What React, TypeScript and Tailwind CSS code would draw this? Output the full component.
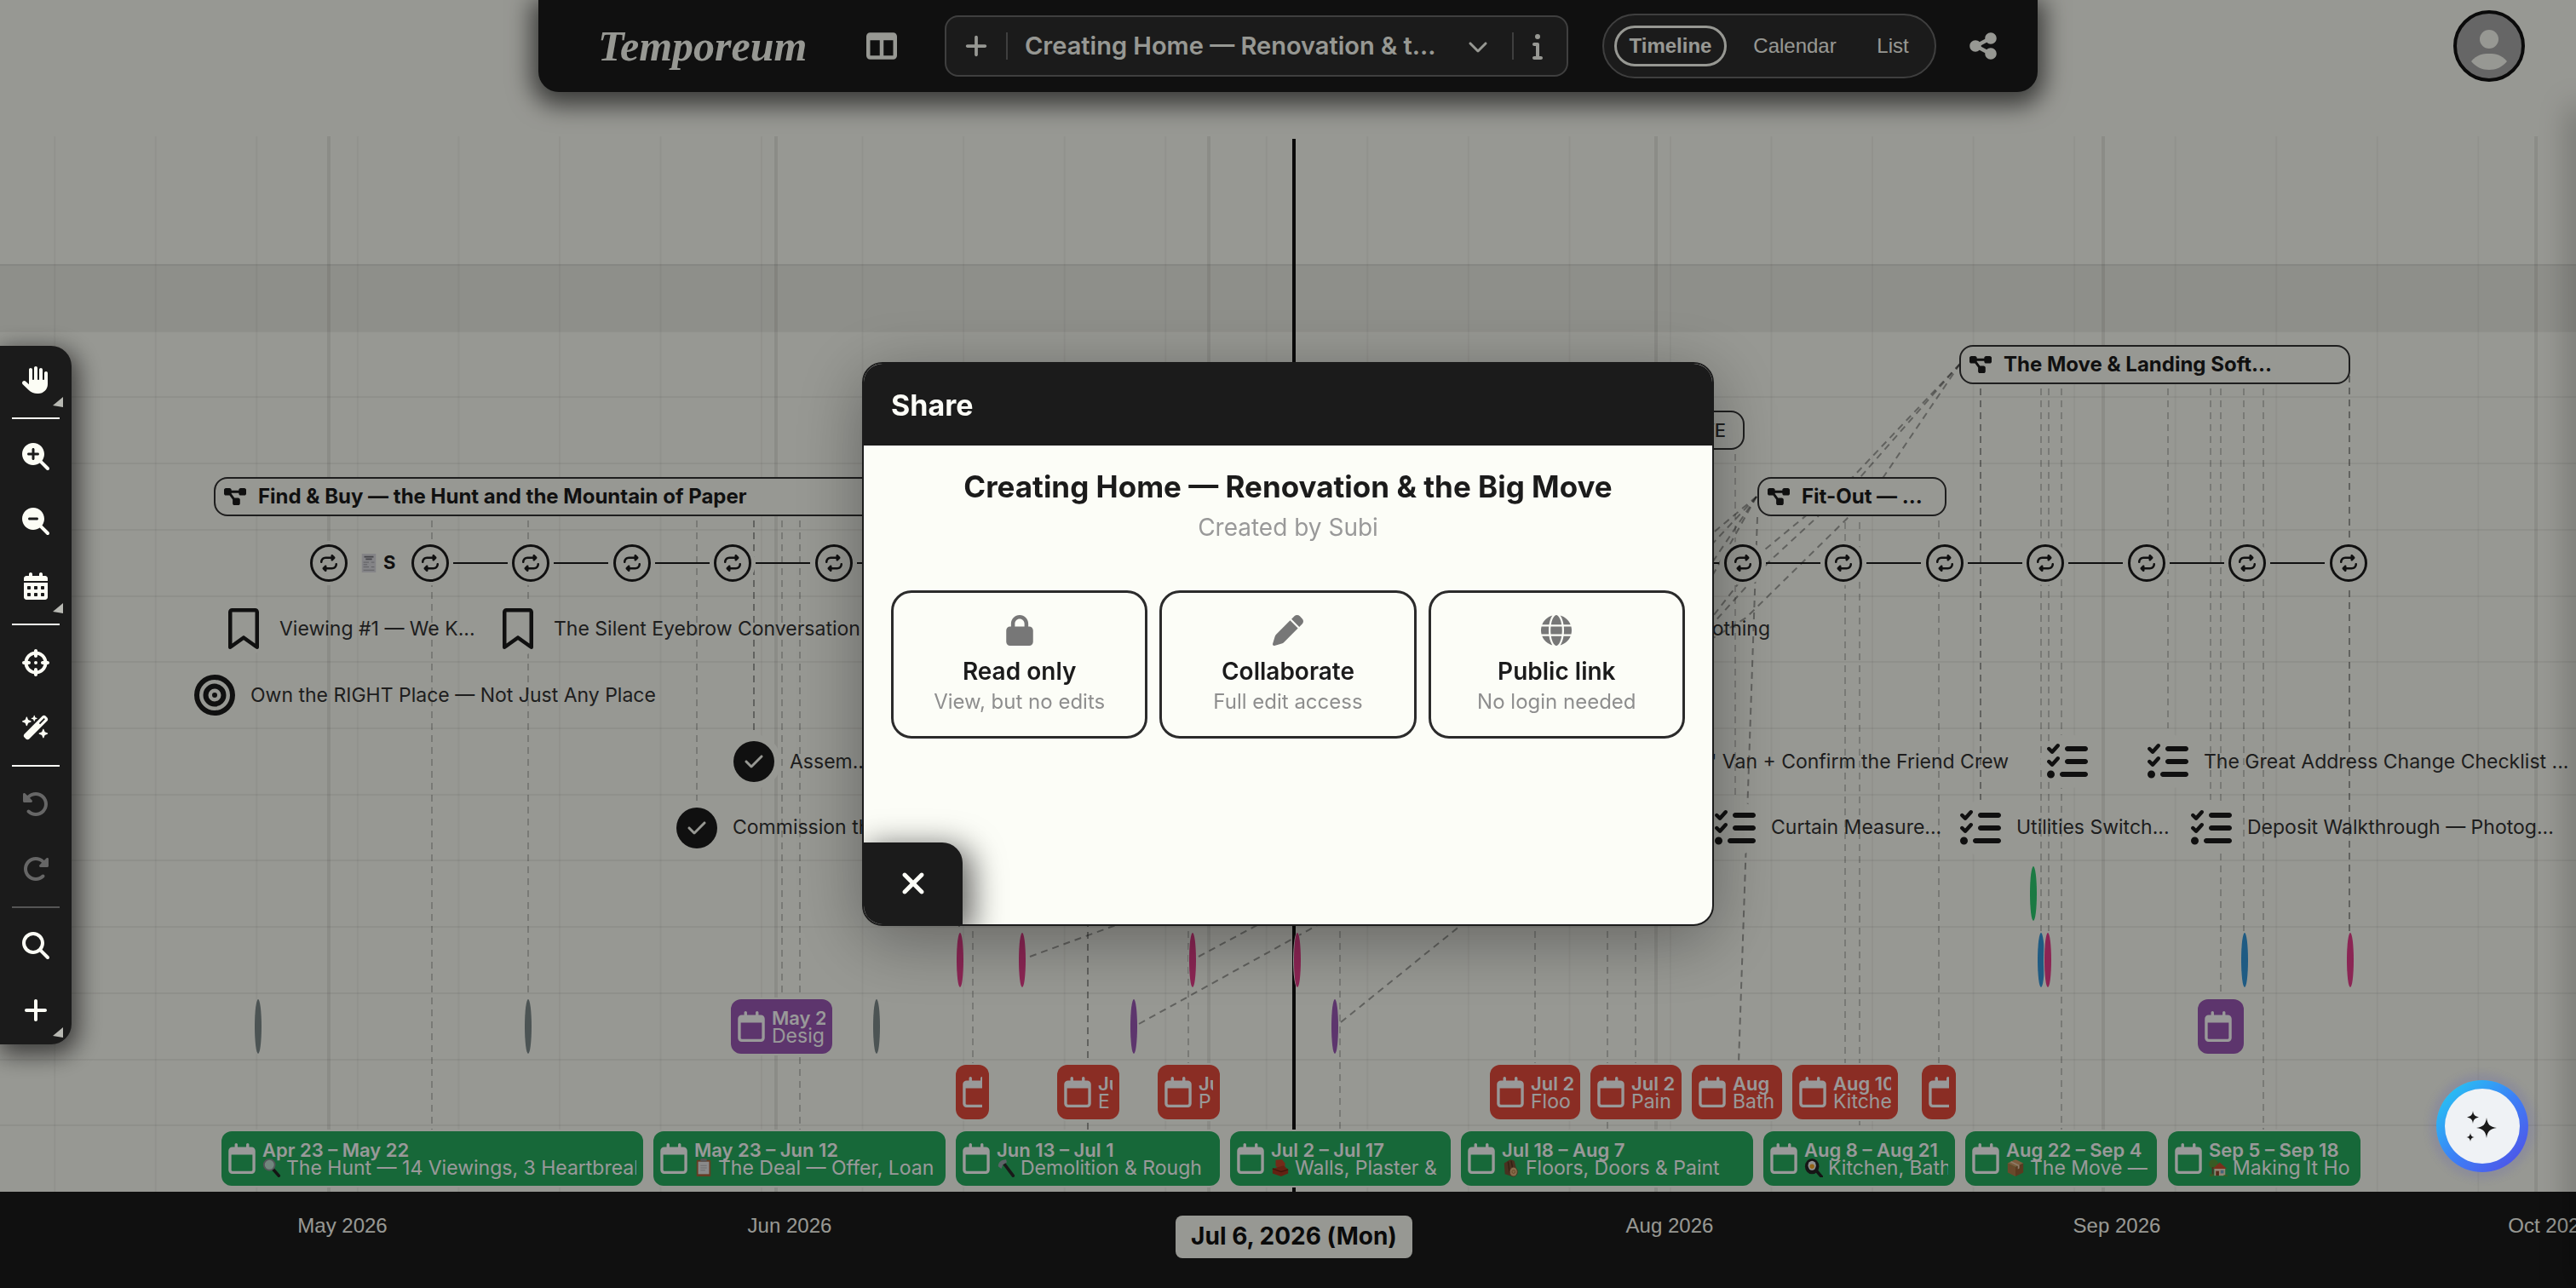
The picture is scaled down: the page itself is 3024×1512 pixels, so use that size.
import type { ReactNode } from 'react';
import {
  FaBullseye,
  FaCalendarDays,
  FaCheck,
  FaChevronDown,
  FaCrosshairs,
  FaDiagramProject,
  FaGlobe,
  FaHand,
  FaInfo,
  FaListCheck,
  FaLock,
  FaMagnifyingGlass,
  FaMagnifyingGlassMinus,
  FaMagnifyingGlassPlus,
  FaPen,
  FaPlus,
  FaRegBookmark,
  FaRegCalendar,
  FaRepeat,
  FaRotateLeft,
  FaRotateRight,
  FaShareNodes,
  FaTableColumns,
  FaWandMagicSparkles,
  FaXmark,
} from 'react-icons/fa6';

type EmojiName = 'magnifier' | 'clipboard' | 'hammer' | 'brick' | 'wood' | 'pan' | 'box' | 'house' | 'receipt';

const emojis: Record<EmojiName, ReactNode> = {
  magnifier: (
    <>
      <path d="M14 14l7 8" stroke="#222" strokeWidth="4" strokeLinecap="round" />
      <circle cx="9" cy="8" r="7" fill="#bfe0d2" stroke="#8a8f94" strokeWidth="2" />
    </>
  ),
  clipboard: (
    <>
      <rect x="3" y="2" width="18" height="21" rx="1" fill="#a8643a" />
      <rect x="5" y="4" width="14" height="16" fill="#e6e6e6" />
      <rect x="8" y="0" width="8" height="4" rx="1" fill="#8d8d8d" />
      <path d="M8 9h8M8 12h8M8 15h6" stroke="#b5b5b5" />
    </>
  ),
  hammer: (
    <>
      <path d="M9 6l12 16" stroke="#2b2b2b" strokeWidth="4" strokeLinecap="round" />
      <path d="M2 10c0-5 3-8 10-9l1 4-5 3-2 5z" fill="#9aa5ad" />
    </>
  ),
  brick: (
    <>
      <path d="M6 2l8-1 4 5v5l-9 2-3-4z" fill="#c0492b" />
      <path d="M2 13l14-4 6 5v5l-9 4-11-4z" fill="#a63a1f" />
      <path d="M2 13l11 4 9-3" stroke="#6d2413" strokeWidth="1.5" fill="none" />
    </>
  ),
  wood: (
    <>
      <path d="M3 6l8-5 5 2 4 16-7 4-9-3z" fill="#7a5236" />
      <path d="M8 4l2 14M12 3l2 10" stroke="#54361f" strokeWidth="1.5" />
      <ellipse cx="15" cy="17" rx="5" ry="6" fill="#e0b27c" stroke="#7a5236" />
      <circle cx="15" cy="17" r="2" fill="none" stroke="#a9773f" />
    </>
  ),
  pan: (
    <>
      <path d="M15 15l7 8" stroke="#222" strokeWidth="4" strokeLinecap="round" />
      <ellipse cx="10" cy="10" rx="9" ry="10" fill="#262626" />
      <ellipse cx="10" cy="9" rx="5" ry="6" fill="#f4f4f4" />
      <circle cx="10" cy="10" r="3" fill="#f7a928" />
    </>
  ),
  box: (
    <>
      <path d="M12 1l10 5-10 5L2 6z" fill="#d09a66" />
      <path d="M2 6l10 5v12L2 18z" fill="#b07a48" />
      <path d="M22 6l-10 5v12l10-5z" fill="#966236" />
      <path d="M7 3.5l10 5v4l-2 1V9.500L5 4.500z" fill="#e9cfae" />
    </>
  ),
  house: (
    <>
      <circle cx="6" cy="7" r="6" fill="#5d9a3c" />
      <path d="M5 11v10" stroke="#7a5236" strokeWidth="2" />
      <path d="M7 12h14v10H7z" fill="#f0dcc0" />
      <path d="M5 13l9-8 9 8z" fill="#c8502f" />
      <path d="M9 16h4v6H9z" fill="#8d4a2b" />
      <path d="M15 15h4v4h-4z" fill="#6fa8c9" />
      <path d="M1 20h5v3H1zM19 21h5v2h-5z" fill="#5d9a3c" />
    </>
  ),
  receipt: (
    <>
      <rect x="3" y="0" width="18" height="24" fill="#dcdce2" />
      <path d="M6 4h12M8 7h8" stroke="#77777d" strokeWidth="2" />
      <path d="M5 11h7M5 14h5M5 17h7M15 11h4M15 17h4M5 21h14" stroke="#9a9aa0" />
    </>
  ),
};

function Emoji({ name }: { name: EmojiName }) {
  return (
    <svg viewBox="0 0 24 24" className="inline-block h-[22px] w-[22px] shrink-0" fill="none" aria-hidden="true">
      {emojis[name]}
    </svg>
  );
}

/* Time scale: 16.935px a day, May 1 sits at 386px */
const DAY = 16.935;
const MAY_1 = 386;

const months = [
  { label: 'May 2026', day: 0 },
  { label: 'Jun 2026', day: 31 },
  { label: 'Jul 2026', day: 61, hidden: true },
  { label: 'Aug 2026', day: 92 },
  { label: 'Sep 2026', day: 123 },
  { label: 'Oct 2026', day: 153 },
];

const weeks = Array.from({ length: 25 }, (_, i) => MAY_1 + (i * 7 - 19) * DAY);
const repeats = Array.from({ length: 21 }, (_, i) => Math.round(MAY_1 + i * 7 * DAY));

/* x, top, bottom, strong */
const drops: [number, number, number, boolean?][] = [
  [507, 611, 1326],
  [620, 611, 1165],
  [818, 611, 940],
  [885, 611, 857, true],
  [918, 611, 1166],
  [939, 611, 1326],
  [1126, 1080, 1094, true],
  [1142, 1093, 1248],
  [1277, 1080, 1326, true],
  [1395, 1093, 1248],
  [1573, 1093, 1326],
  [1802, 1093, 1248],
  [1887, 1093, 1326],
  [1920, 1093, 1248],
  [2037, 533, 937],
  [2166, 613, 1248],
  [2183, 613, 1326],
  [2276, 611, 1248],
  [2325, 456, 939, true],
  [2396, 456, 1093],
  [2405, 456, 1093],
  [2420, 456, 1326],
  [2545, 456, 855],
  [2595, 456, 939],
  [2607, 456, 1170],
  [2634, 456, 1093],
  [2657, 456, 1326],
  [2758, 441, 1093, true],
];

const links = [
  'M1209 1123L1340 1075',
  'M1407 1123L1500 1073',
  'M1337 1202L1570 1073',
  'M1574 1200L1725 1078',
  'M2063 607L2041 1248',
  'M2301 427L2175 560L2072 645L1990 750',
  'M2301 427L2184 560L2076 660L1990 755',
  'M2301 427L2211 560L2168 609L2050 725L1990 762',
  'M2062 583L1990 643',
  'M2062 583L1990 660',
  'M2062 583L1990 690',
  'M2062 583L1990 712',
];

function Grid() {
  return (
    <svg className="absolute left-0 bottom-0 h-[1399px] w-full" aria-hidden="true">
      {weeks.map((x) => (
        <path key={x} d={`M${x} 160V1399`} stroke="#000" strokeOpacity="0.04" strokeWidth="2" />
      ))}
      {months.map((m) => (
        <path
          key={m.label}
          d={`M${MAY_1 + m.day * DAY} 160V1399`}
          stroke="#000"
          strokeOpacity="0.08"
          strokeWidth="4"
        />
      ))}
      <path d="M1519 163V1399" stroke="#111" strokeWidth="4" />
      {drops.map(([x, top, bottom, strong]) => (
        <path
          key={x}
          d={`M${x} ${top}V${bottom}`}
          stroke="#1b1b1b"
          strokeOpacity={strong ? 0.4 : 0.22}
          strokeWidth="2"
          strokeDasharray="8 6"
        />
      ))}
      {links.map((d) => (
        <path key={d} d={d} fill="none" stroke="#1b1b1b" strokeOpacity="0.4" strokeWidth="2" strokeDasharray="8 6" />
      ))}
    </svg>
  );
}

function Row({ shaded, children }: { shaded?: boolean; children?: ReactNode }) {
  return (
    <div className={`relative border-t-2 border-black/5 ${shaded ? 'bg-black/6' : ''}`}>{children}</div>
  );
}

/* Puts its child on the row's centre line, x px from the left */
function At({ x, w, children }: { x: number; w?: number; children: ReactNode }) {
  return (
    <div className="absolute inset-y-0 flex items-center" style={{ left: x, width: w }}>
      {children}
    </div>
  );
}

function Phase({ x, w, children }: { x: number; w: number; children: ReactNode }) {
  return (
    <At x={x} w={w}>
      <button className="flex h-[46px] w-full items-center gap-3.5 overflow-hidden whitespace-nowrap rounded-2xl border-2 border-[#333] bg-[#fcfdf5] px-2.5 text-2xl font-bold text-[#1b1b1b]">
        <FaDiagramProject className="h-[26px] w-[26px] shrink-0" />
        {children}
      </button>
    </At>
  );
}

function Note({ x, kind, children }: { x: number; kind: 'bookmark' | 'goal' | 'done' | 'list'; children?: ReactNode }) {
  return (
    <At x={x}>
      <button className="flex items-center gap-[10px] whitespace-nowrap text-[23px] text-[#333]">
        <span className="flex h-16 w-16 shrink-0 items-center justify-center rounded-full bg-[#fcfdf5] text-[#1b1b1b]">
          {kind === 'bookmark' && <FaRegBookmark className="h-12 w-12" />}
          {kind === 'goal' && <FaBullseye className="h-12 w-12" />}
          {kind === 'list' && <FaListCheck className="h-12 w-12" />}
          {kind === 'done' && (
            <span className="flex h-12 w-12 items-center justify-center rounded-full bg-[#1b1b1b] text-[#fcfdf5]">
              <FaCheck className="h-6 w-6" />
            </span>
          )}
        </span>
        {children}
      </button>
    </At>
  );
}

const tones = {
  green: 'bg-[#27ae60]',
  emerald: 'bg-[#2ecc71]',
  red: 'bg-[#e74c3c]',
  purple: 'bg-[#9b59b6]',
  pink: 'bg-[#e83e8c]',
  blue: 'bg-[#3498db]',
  gray: 'bg-[#7f8c8d]',
};

type Tone = keyof typeof tones;

function Bar({ x, tone }: { x: number; tone: Tone }) {
  return (
    <At x={x}>
      <div className={`h-16 w-2 rounded-[50%] ring-1 ring-[#fcfdf5] ${tones[tone]}`} />
    </At>
  );
}

interface EventProps {
  x: number;
  w: number;
  tone: Tone;
  dates?: string;
  title?: string;
  emoji?: EmojiName;
}

function Event({ x, w, tone, dates, title, emoji }: EventProps) {
  return (
    <At x={x} w={w}>
      <button className={`h-16 w-full rounded-xl px-2 text-left text-white ring-2 ring-[#fcfdf5] ${tones[tone]}`}>
        <span className="flex h-16 items-center gap-2 overflow-hidden whitespace-nowrap">
          <FaRegCalendar className="h-9 w-8 shrink-0" />
          {dates && (
            <span className="text-[22px] leading-[22px]">
              <span className="block font-semibold">{dates}</span>
              <span className="flex h-5 items-center gap-[6px] text-[23px]">
                {emoji && <Emoji name={emoji} />}
                {title}
              </span>
            </span>
          )}
        </span>
      </button>
    </At>
  );
}

const trades: EventProps[] = [
  { x: 1122, w: 39, tone: 'red' },
  { x: 1241, w: 73, tone: 'red', dates: 'Ju', title: 'E' },
  { x: 1359, w: 73, tone: 'red', dates: 'Ju', title: 'P' },
  { x: 1749, w: 106, tone: 'red', dates: 'Jul 2', title: 'Floo' },
  { x: 1867, w: 107, tone: 'red', dates: 'Jul 2', title: 'Pain' },
  { x: 1986, w: 106, tone: 'red', dates: 'Aug', title: 'Bath' },
  { x: 2104, w: 124, tone: 'red', dates: 'Aug 10', title: 'Kitche' },
  { x: 2256, w: 40, tone: 'red' },
];

const stages: EventProps[] = [
  { x: 260, w: 495, tone: 'green', dates: 'Apr 23 – May 22', title: 'The Hunt — 14 Viewings, 3 Heartbreak', emoji: 'magnifier' },
  { x: 767, w: 343, tone: 'green', dates: 'May 23 – Jun 12', title: 'The Deal — Offer, Loan', emoji: 'clipboard' },
  { x: 1122, w: 310, tone: 'green', dates: 'Jun 13 – Jul 1', title: 'Demolition & Rough', emoji: 'hammer' },
  { x: 1444, w: 259, tone: 'green', dates: 'Jul 2 – Jul 17', title: 'Walls, Plaster &', emoji: 'brick' },
  { x: 1715, w: 343, tone: 'green', dates: 'Jul 18 – Aug 7', title: 'Floors, Doors & Paint', emoji: 'wood' },
  { x: 2070, w: 225, tone: 'green', dates: 'Aug 8 – Aug 21', title: 'Kitchen, Bath', emoji: 'pan' },
  { x: 2307, w: 225, tone: 'green', dates: 'Aug 22 – Sep 4', title: 'The Move —', emoji: 'box' },
  { x: 2545, w: 226, tone: 'green', dates: 'Sep 5 – Sep 18', title: 'Making It Ho', emoji: 'house' },
];

function Timeline() {
  return (
    <main className="relative flex-1 overflow-hidden">
      <Grid />
      <div className="grid h-full auto-rows-fr pt-[310px] pb-px">
        <Row shaded />
        <Row>
          <Phase x={2300} w={459}>The Move & Landing Soft...</Phase>
        </Row>
        <Row>
          <At x={1830} w={218}>
            <div className="flex h-[46px] w-full items-center justify-end rounded-2xl border-2 border-[#333] bg-[#fcfdf5] px-5 text-[22px] font-medium text-[#333]">
              MOVE
            </div>
          </At>
        </Row>
        <Row>
          <Phase x={251} w={800}>Find & Buy — the Hunt and the Mountain of Paper</Phase>
          <Phase x={2063} w={222}>Fit-Out — ...</Phase>
        </Row>
        <Row>
          {repeats.map((x, i) => (
            <At key={x} x={x - 27}>
              <button
                aria-label="Repeat"
                className="flex h-[52px] w-[54px] items-center justify-center rounded-full bg-[#fcfdf5] text-[#1b1b1b]"
              >
                <span className="flex h-11 w-11 items-center justify-center rounded-full border-3 border-[#1b1b1b]">
                  <FaRepeat className="h-5 w-5" />
                </span>
              </button>
              {i > 0 && i < 20 && <span className="h-0.5 w-16 bg-[#1b1b1b]" />}
            </At>
          ))}
          <At x={422} w={48}>
            <span className="flex items-center gap-1.5 text-[22px] font-bold text-[#1b1b1b]">
              <Emoji name="receipt" />S
            </span>
          </At>
        </Row>
        <Row>
          <Note x={254} kind="bookmark">Viewing #1 — We K...</Note>
          <Note x={576} kind="bookmark">The Silent Eyebrow Conversation</Note>
          <At x={1990} w={88}>
            <span className="ml-auto text-[23px] text-[#333]">Nothing</span>
          </At>
        </Row>
        <Row>
          <Note x={220} kind="goal">Own the RIGHT Place — Not Just Any Place</Note>
        </Row>
        <Row>
          <Note x={853} kind="done">Assem...</Note>
          <At x={1900} w={458}>
            <span className="ml-auto whitespace-nowrap text-[23px] text-[#333]">' Van + Confirm the Friend Crew</span>
          </At>
          <Note x={2395} kind="list" />
          <Note x={2513} kind="list">The Great Address Change Checklist ...</Note>
        </Row>
        <Row>
          <Note x={786} kind="done">Commission the</Note>
          <Note x={2005} kind="list">Curtain Measure...</Note>
          <Note x={2293} kind="list">Utilities Switch...</Note>
          <Note x={2564} kind="list">Deposit Walkthrough — Photog...</Note>
        </Row>
        <Row>
          <Bar x={2383} tone="emerald" />
        </Row>
        <Row>
          <Bar x={1123} tone="pink" />
          <Bar x={1196} tone="pink" />
          <Bar x={1396} tone="pink" />
          <Bar x={1519} tone="pink" />
          <Bar x={2392} tone="blue" />
          <Bar x={2400} tone="pink" />
          <Bar x={2631} tone="blue" />
          <Bar x={2755} tone="pink" />
        </Row>
        <Row>
          <Bar x={299} tone="gray" />
          <Bar x={616} tone="gray" />
          <Event x={858} w={119} tone="purple" dates="May 2" title="Desig" />
          <Bar x={1025} tone="gray" />
          <Bar x={1327} tone="purple" />
          <Bar x={1563} tone="purple" />
          <Event x={2580} w={54} tone="purple" />
        </Row>
        <Row>
          {trades.map((event) => (
            <Event key={event.x} {...event} />
          ))}
        </Row>
        <Row>
          {stages.map((event) => (
            <Event key={event.x} {...event} />
          ))}
        </Row>
      </div>
    </main>
  );
}

function Header() {
  return (
    <header className="absolute inset-x-0 top-0 z-10 flex justify-center">
      <div className="flex h-[108px] w-[1760px] items-center rounded-b-3xl bg-[#1b1b1b] pl-[70px] pr-[46px] text-[#fcfdf5] shadow-[0_8px_28px_8px_rgba(0,0,0,0.6)]">
        <span className="w-[315px] font-['Liberation_Serif',serif] text-[50px] font-bold italic">Temporeum</span>
        <button aria-label="Layout">
          <FaTableColumns className="h-9 w-9" />
        </button>
        <div className="ml-14 flex h-[72px] w-[732px] items-center rounded-2xl border-2 border-[#6a6a6a] bg-[#2e2e2e] pl-5">
          <button aria-label="New timeline">
            <FaPlus className="h-[30px] w-[30px]" />
          </button>
          <span className="ml-5 h-8 w-0.5 bg-[#6a6a6a]" />
          <button className="flex w-[592px] items-center justify-between pl-5 pr-7 text-[29px] font-semibold whitespace-nowrap">
            Creating Home — Renovation & t...
            <FaChevronDown className="h-6 w-6" />
          </button>
          <span className="h-8 w-0.5 bg-[#6a6a6a]" />
          <button aria-label="Info" className="ml-3">
            <FaInfo className="h-8 w-8" />
          </button>
        </div>
        <nav className="ml-10 flex h-[76px] w-[392px] items-center rounded-full border-2 border-[#6a6a6a] bg-[#2e2e2e] pl-3 font-['Liberation_Sans',sans-serif] text-2xl">
          <button className="h-12 w-[132px] rounded-full border-3 border-[#fcfdf5] font-bold">Timeline</button>
          <button className="w-[160px]">Calendar</button>
          <button className="w-[70px]">List</button>
        </nav>
        <button aria-label="Share" className="ml-auto">
          <FaShareNodes className="h-9 w-9" />
        </button>
      </div>
      <button aria-label="Account" className="absolute right-[60px] top-3 h-[84px] w-[84px] overflow-hidden rounded-full border-4 border-[#111] bg-[#aaa]">
        <svg viewBox="0 0 76 76" className="h-full w-full" fill="#fcfdf5">
          <circle cx="38" cy="30" r="11" />
          <path d="M17 56C24 48 30 47 38 47s14 1 21 9c-6 7-13 10-21 10s-15-3-21-10z" />
        </svg>
      </button>
    </header>
  );
}

function Axis() {
  return (
    <footer className="relative h-[113px] overflow-hidden bg-[#1b1b1b] font-['Liberation_Sans',sans-serif] text-2xl text-[#fcfdf5]">
      {months
        .filter((m) => !m.hidden)
        .map((m) => (
          <span
            key={m.label}
            className="absolute top-6 w-[120px] whitespace-nowrap text-center"
            style={{ left: Math.round(MAY_1 + m.day * DAY - 44) }}
          >
            {m.label}
          </span>
        ))}
      <span className="absolute left-[1380px] top-7 flex h-[50px] w-[278px] items-center justify-center rounded-lg bg-[#fcfdf5] font-[Inter,sans-serif] text-[28px] font-bold text-[#111]">
        Jul 6, 2026 (Mon)
      </span>
    </footer>
  );
}

interface ToolProps {
  label: string;
  icon: ReactNode;
  more?: boolean;
  disabled?: boolean;
}

const tools: ToolProps[][] = [
  [{ label: 'Pan', icon: <FaHand />, more: true }],
  [
    { label: 'Zoom in', icon: <FaMagnifyingGlassPlus /> },
    { label: 'Zoom out', icon: <FaMagnifyingGlassMinus /> },
    { label: 'Range', icon: <FaCalendarDays />, more: true },
  ],
  [
    { label: 'Center', icon: <FaCrosshairs /> },
    { label: 'Tidy up', icon: <FaWandMagicSparkles /> },
  ],
  [
    { label: 'Undo', icon: <FaRotateLeft />, disabled: true },
    { label: 'Redo', icon: <FaRotateRight />, disabled: true },
  ],
  [
    { label: 'Search', icon: <FaMagnifyingGlass /> },
    { label: 'Add', icon: <FaPlus />, more: true },
  ],
];

function Toolbar() {
  return (
    <aside className="pointer-events-none fixed bottom-0 left-0 top-[120px] z-30 flex items-center">
      <div className="pointer-events-auto w-[84px] rounded-r-3xl bg-[#1b1b1b] py-0.5 text-[32px] text-[#fcfdf5] shadow-[4px_8px_28px_4px_rgba(0,0,0,0.6)]">
        {tools.map((group, index) => (
          <div key={group[0].label}>
            {index > 0 && <hr className={`mx-3.5 my-1.5 border-t-2 ${index === 4 ? 'border-[#555]' : 'border-[#fcfdf5]'}`} />}
            {group.map((tool) => (
              <button
                key={tool.label}
                aria-label={tool.label}
                disabled={tool.disabled}
                className="relative flex h-[76px] w-full items-center justify-center disabled:text-[#666]"
              >
                {tool.icon}
                {tool.more && (
                  <svg viewBox="0 0 12 12" className="absolute bottom-1.5 right-2.5 h-3 w-3" fill="#b8b9b3">
                    <path d="M12 0v12L0 10z" />
                  </svg>
                )}
              </button>
            ))}
          </div>
        ))}
      </div>
    </aside>
  );
}

const shareOptions = [
  { title: 'Read only', text: 'View, but no edits', Icon: FaLock },
  { title: 'Collaborate', text: 'Full edit access', Icon: FaPen },
  { title: 'Public link', text: 'No login needed', Icon: FaGlobe },
];

function ShareDialog() {
  return (
    <div className="fixed inset-0 z-20 flex items-center justify-center bg-black/40">
      <section
        role="dialog"
        aria-labelledby="share-title"
        className="flex h-[662px] w-[1000px] flex-col overflow-hidden rounded-3xl border-2 border-[#1b1b1b] bg-[#fcfdf7] text-[#1b1b1b] shadow-[0_16px_80px_0_rgba(0,0,0,0.35)]"
      >
        <h2 id="share-title" className="flex h-24 items-center bg-[#1b1b1b] px-8 text-[34px] font-bold text-[#fcfdf7]">
          Share
        </h2>
        <div className="flex-1 px-8 pt-[26px] text-center">
          <h3 className="text-[35px] leading-[44px] font-bold">Creating Home — Renovation & the Big Move</h3>
          <p className="mt-2 text-[28px] leading-9 text-[#999]">Created by Subi</p>
          <div className="mt-14 grid grid-cols-3 gap-3.5">
            {shareOptions.map(({ title, text, Icon }) => (
              <button key={title} className="flex h-[174px] flex-col items-center rounded-3xl border-3 border-[#2b2b2b] pt-[26px]">
                <Icon className="h-9 w-9 text-[#777]" />
                <span className="mt-3 text-[28px] leading-9 font-semibold">{title}</span>
                <span className="text-[24px] leading-9 text-[#8e8e8e]">{text}</span>
              </button>
            ))}
          </div>
        </div>
        <button
          aria-label="Close"
          className="flex h-24 w-[116px] items-center justify-center rounded-tr-3xl bg-[#1b1b1b] text-[#fcfdf7] shadow-[8px_8px_36px_4px_rgba(0,0,0,0.6)]"
        >
          <FaXmark className="h-10 w-10" />
        </button>
      </section>
    </div>
  );
}

function AssistantButton() {
  return (
    <button
      aria-label="Assistant"
      className="fixed bottom-[136px] right-14 z-30 h-[108px] w-[108px] rounded-full bg-linear-to-br from-[#1fd0f0] via-[#3b82f6] to-[#4f46e5] p-2.5 shadow-[0_0_8px_8px_rgba(99,102,180,0.2)]"
    >
      <span className="flex h-full w-full items-center justify-center rounded-full bg-[#eff2f5]">
        <svg viewBox="0 0 44 44" className="h-11 w-11" fill="#1b1b1b">
          <path d="M27 12c1 8 4 11 12 12-8 1-11 4-12 12-1-8-4-11-12-12 8-1 11-4 12-12z" />
          <path d="M11 4c.6 5 2.500 6.500 7 7.500-4.500 1-6.400 2.500-7 7.500-.6-5-2.500-6.500-7-7.500 4.500-1 6.400-2.500 7-7.500z" />
          <path d="M8 30c.4 3 1.600 4.500 4.500 5-2.900.5-4.100 2-4.500 5-.4-3-1.600-4.500-4.500-5 2.900-.5 4.100-2 4.500-5z" />
        </svg>
      </span>
    </button>
  );
}

export default function App() {
  return (
    <div className="relative flex h-screen min-h-[1000px] flex-col overflow-hidden bg-[#fcfdf5] font-[Inter,sans-serif]">
      <Header />
      <Timeline />
      <Axis />
      {/* edge of the closed details drawer */}
      <div className="absolute -right-2 bottom-0 top-[130px] w-2 shadow-[0_0_36px_4px_rgba(0,0,0,0.4)]" />
      <ShareDialog />
      <Toolbar />
      <AssistantButton />
    </div>
  );
}
